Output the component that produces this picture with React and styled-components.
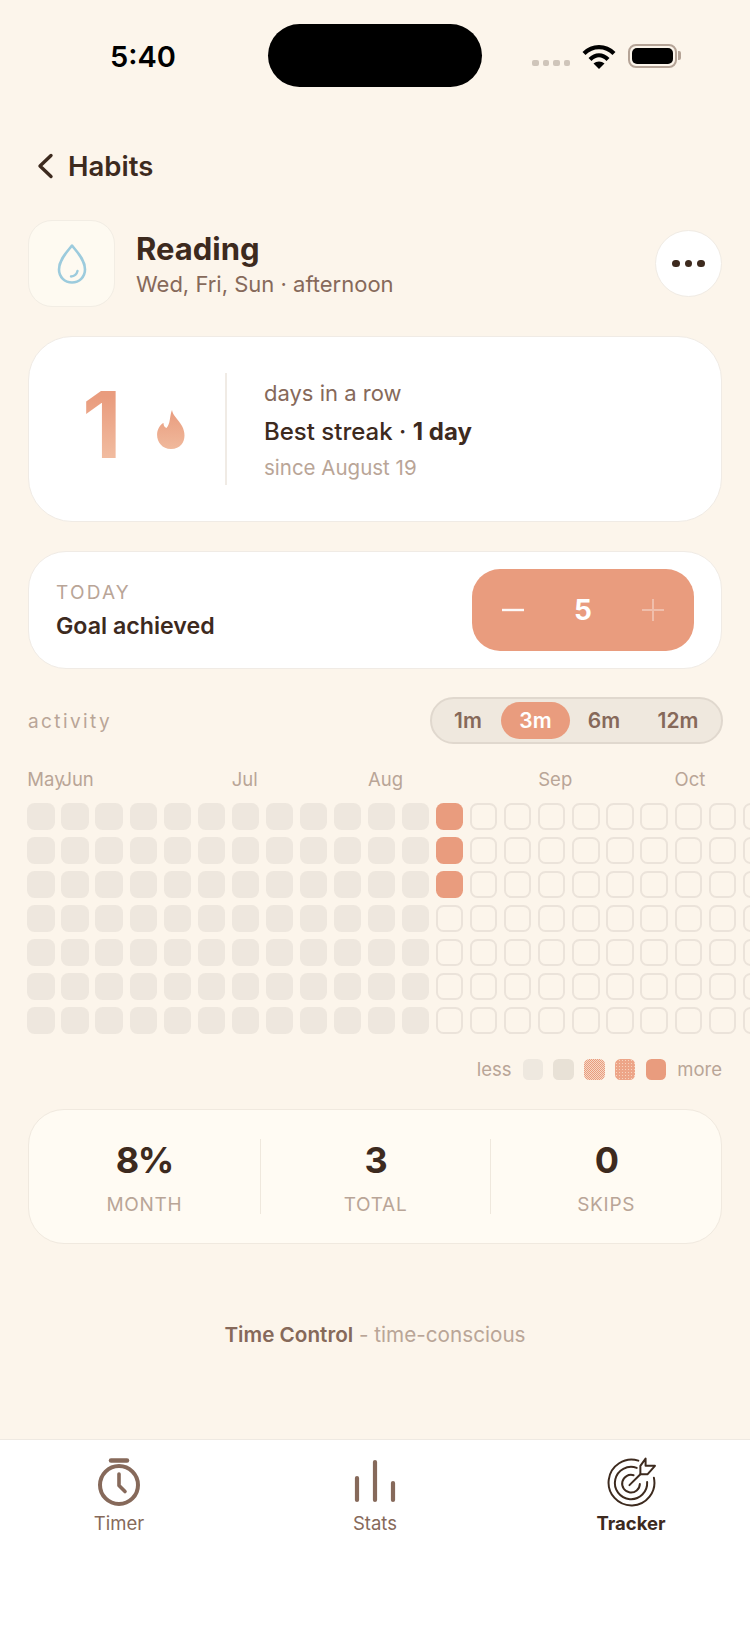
import React from "react";
import styled, { createGlobalStyle, css } from "styled-components";

const ACCENT = "#e99c7e";
const DARK = "#3d2a1e";
const MID = "#86695a";
const LIGHT = "#b9a597";
const PAGE = "#fcf5eb";

const MONTHS = [
  { name: "May", col: 1 },
  { name: "Jun", col: 2 },
  { name: "Jul", col: 7 },
  { name: "Aug", col: 11 },
  { name: "Sep", col: 16 },
  { name: "Oct", col: 20 },
];
const RANGES = [
  { label: "1m", width: 66 },
  { label: "3m", width: 69 },
  { label: "6m", width: 68 },
  { label: "12m", width: 80 },
];
const STATS = [
  { value: "8%", label: "MONTH" },
  { value: "3", label: "TOTAL" },
  { value: "0", label: "SKIPS" },
];

// 22 visible weeks, the last few run off the right edge
const cells = [];
for (let col = 0; col < 22; col++) {
  for (let row = 0; row < 7; row++) {
    let kind = "empty";
    if (col < 12) kind = "past";
    if (col === 12 && row < 3) kind = "done";
    cells.push(kind);
  }
}

export default function App() {
  return (
    <Root>
      <GlobalStyle />
      <StatusBar>
        <Time>5:40</Time>
        <Island />
        <StatusIcons>
          <SignalDots>
            <i />
            <i />
            <i />
            <i />
          </SignalDots>
          <svg width="34" height="25" viewBox="0 0 34 25">
            <path d="M2 9.5C10.500 1 23.500 1 32 9.500" fill="none" stroke="#000" strokeWidth="4.200" />
            <path d="M8 15.500C13.500 10 20.500 10 26 15.500" fill="none" stroke="#000" strokeWidth="4.200" />
            <path d="M11.500 19.500C14.500 16.800 19.500 16.800 22.500 19.500L17 25Z" fill="#000" />
          </svg>
          <Battery>
            <BatteryFill />
          </Battery>
        </StatusIcons>
      </StatusBar>

      <Main>
        <BackLink>
          <svg width="18" height="26" viewBox="0 0 18 26">
            <path d="M15 2.500L4 13l11 10.500" fill="none" stroke={DARK} strokeWidth="3.400" strokeLinecap="round" strokeLinejoin="round" />
          </svg>
          <span>Habits</span>
        </BackLink>

        <Header>
          <IconBox>
            <svg width="32" height="42" viewBox="0 0 32 42">
              <path
                d="M16 2.500C12 8 3 16 3 26.500C3 34 8.800 39.500 16 39.500C23.200 39.500 29 34 29 26.500C29 16 20 8 16 2.500Z"
                fill="none"
                stroke="#9ccbdd"
                strokeWidth="2.600"
                strokeLinejoin="round"
              />
              <path d="M15 33.500C18 33.300 20.800 31 21.500 28" fill="none" stroke="#9ccbdd" strokeWidth="2.400" strokeLinecap="round" />
            </svg>
          </IconBox>
          <HeaderText>
            <Title>Reading</Title>
            <Subtitle>Wed, Fri, Sun · afternoon</Subtitle>
          </HeaderText>
          <MoreButton>
            <i />
            <i />
            <i />
          </MoreButton>
        </Header>

        <StreakCard>
          <StreakCount>
            <BigNumber>1</BigNumber>
            <svg width="30" height="39" viewBox="0 0 30 39">
              <defs>
                <linearGradient id="flame" x1="0" y1="0" x2="0" y2="1">
                  <stop offset="0" stopColor="#e99c7e" />
                  <stop offset="1" stopColor="#f0b99c" />
                </linearGradient>
              </defs>
              <path
                d="M16 0C16.500 5 22 9 26 16C31 25 29 39 15 39C3 39 -2 26 3 17.500C4.500 15 6 13.500 7.500 13C7.500 15.500 8.500 17.500 10.500 18C14.500 14 13.500 6 16 0Z"
                fill="url(#flame)"
              />
            </svg>
          </StreakCount>
          <StreakText>
            <StreakLine>days in a row</StreakLine>
            <BestLine>
              Best streak · <b>1 day</b>
            </BestLine>
            <SinceLine>since August 19</SinceLine>
          </StreakText>
        </StreakCard>

        <TodayCard>
          <TodayText>
            <TodayLabel>TODAY</TodayLabel>
            <TodayGoal>Goal achieved</TodayGoal>
          </TodayText>
          <Stepper>
            <StepSign>
              <svg width="22" height="22" viewBox="0 0 22 22">
                <path d="M0 11h22" stroke="#fff" strokeWidth="2.400" opacity="0.95" />
              </svg>
            </StepSign>
            <StepValue>5</StepValue>
            <StepSign>
              <svg width="22" height="22" viewBox="0 0 22 22">
                <path d="M0 11h22M11 0v22" stroke="#fff" strokeWidth="2" opacity="0.35" />
              </svg>
            </StepSign>
          </Stepper>
        </TodayCard>

        <ActivityHead>
          <ActivityTitle>activity</ActivityTitle>
          <RangeSwitch>
            {RANGES.map((range) => (
              <RangeOption key={range.label} $active={range.label === "3m"} $width={range.width}>
                {range.label}
              </RangeOption>
            ))}
          </RangeSwitch>
        </ActivityHead>

        <MonthRow>
          {MONTHS.map((month) => (
            <MonthLabel key={month.name} $col={month.col}>
              {month.name}
            </MonthLabel>
          ))}
        </MonthRow>
        <HeatGrid>
          {cells.map((kind, i) => (
            <HeatCell key={i} $kind={kind} />
          ))}
        </HeatGrid>

        <Legend>
          <LegendText>less</LegendText>
          <LegendSwatches>
            <LegendSwatch $level={0} />
            <LegendSwatch $level={1} />
            <LegendSwatch $level={2} />
            <LegendSwatch $level={3} />
            <LegendSwatch $level={4} />
          </LegendSwatches>
          <LegendText>more</LegendText>
        </Legend>

        <StatsCard>
          {STATS.map((stat) => (
            <StatCol key={stat.label}>
              <StatValue>{stat.value}</StatValue>
              <StatLabel>{stat.label}</StatLabel>
            </StatCol>
          ))}
        </StatsCard>

        <Footnote>
          <b>Time Control</b> - time-conscious
        </Footnote>
      </Main>

      <TabBar>
        <TabItem>
          <svg width="44" height="48" viewBox="0 0 44 48">
            <path d="M14 2.500h16" stroke={MID} strokeWidth="4.500" strokeLinecap="round" />
            <circle cx="22" cy="27" r="19" fill="none" stroke={MID} strokeWidth="4" />
            <path d="M22 16v11.500l6 6" fill="none" stroke={MID} strokeWidth="3.600" strokeLinecap="round" strokeLinejoin="round" />
          </svg>
          <TabLabel>Timer</TabLabel>
        </TabItem>
        <TabItem>
          <svg width="44" height="48" viewBox="0 0 44 48">
            <path d="M4 20v22M22 4v38M40 25v17" fill="none" stroke={MID} strokeWidth="4.200" strokeLinecap="round" />
          </svg>
          <TabLabel>Stats</TabLabel>
        </TabItem>
        <TabItem>
          <TargetIcon width="50" height="50" viewBox="0 0 48 48">
            <g fill="none" stroke={DARK} strokeWidth="1.900" strokeLinecap="round" strokeLinejoin="round">
              <path d="M31 3.500A22 22 0 1 0 46 20" />
              <path d="M29.500 10.500A15.500 15.500 0 1 0 39.500 24" />
              <path d="M26.500 17.500A8.500 8.500 0 1 0 32.500 26" />
              <path d="M22.500 27L33 16.500" />
              <path d="M33 16.500V8.500L38 1.500V8.500H47L40 16.500Z" />
            </g>
          </TargetIcon>
          <TabLabel $active>Tracker</TabLabel>
        </TabItem>
      </TabBar>
    </Root>
  );
}

const GlobalStyle = createGlobalStyle`
  html, body {
    margin: 0;
    padding: 0;
    background: ${PAGE};
    overflow: hidden;
  }
  body {
    font-family: Inter, "Liberation Sans", sans-serif;
    color: ${DARK};
  }
`;

const Root = styled.div`
  width: 750px;
  height: 1630px;
  display: flex;
  flex-direction: column;
  overflow: hidden;
  background: ${PAGE};
`;

const StatusBar = styled.div`
  box-sizing: border-box;
  height: 110px;
  padding: 23.500px 64px 0 110px;
  display: flex;
  align-items: flex-start;
`;

const Time = styled.div`
  width: 66px;
  margin-top: 15px;
  font-size: 29px;
  line-height: 36px;
  font-weight: 600;
  color: #000;
  white-space: nowrap;
`;

const Island = styled.div`
  width: 214px;
  height: 63px;
  margin-left: 92px;
  border-radius: 32px;
  background: #000;
`;

const StatusIcons = styled.div`
  display: flex;
  align-items: center;
  gap: 12px;
  margin-top: 20px;
  margin-left: auto;
  width: 154px;
`;

const SignalDots = styled.div`
  display: flex;
  gap: 4px;
  margin-top: 14px;

  i {
    width: 6.500px;
    height: 6.500px;
    border-radius: 2px;
    background: #cfc5ba;
  }
`;

const Battery = styled.div`
  position: relative;
  box-sizing: border-box;
  width: 49px;
  height: 24px;
  padding: 2px;
  border: 2px solid #b5a497;
  border-radius: 8px;

  &::after {
    content: "";
    position: absolute;
    right: -6px;
    top: 5px;
    width: 3px;
    height: 9px;
    border-radius: 0 2px 2px 0;
    background: #b5a497;
  }
`;

const BatteryFill = styled.div`
  height: 100%;
  border-radius: 5px;
  background: #000;
`;

const Main = styled.main`
  flex: 1;
  padding: 0 28px;
  display: flex;
  flex-direction: column;
`;

const BackLink = styled.div`
  margin-top: 36px;
  height: 40px;
  padding-left: 8px;
  display: flex;
  align-items: center;
  gap: 14px;
  font-size: 27.500px;
  font-weight: 600;
  color: ${DARK};
`;

const Header = styled.div`
  margin-top: 34px;
  display: flex;
  align-items: center;
`;

const IconBox = styled.div`
  box-sizing: border-box;
  width: 87px;
  height: 87px;
  border: 1.500px solid #f2ede4;
  border-radius: 24px;
  background: #fefaf1;
  display: flex;
  align-items: center;
  justify-content: center;
`;

const HeaderText = styled.div`
  flex: 1;
  margin-left: 21px;
  margin-top: 2px;
`;

const Title = styled.div`
  font-size: 31px;
  line-height: 38px;
  font-weight: 700;
  color: ${DARK};
`;

const Subtitle = styled.div`
  margin-top: 1px;
  font-size: 22px;
  line-height: 30px;
  color: ${MID};
`;

const MoreButton = styled.div`
  box-sizing: border-box;
  width: 67px;
  height: 67px;
  border: 1.500px solid #f0ebe4;
  border-radius: 50%;
  background: #fff;
  display: flex;
  align-items: center;
  justify-content: center;
  gap: 5px;

  i {
    width: 7.500px;
    height: 7.500px;
    border-radius: 50%;
    background: ${DARK};
  }
`;

const Card = styled.div`
  box-sizing: border-box;
  border: 1.500px solid #f0ebe5;
  background: #fff;
`;

const StreakCard = styled(Card)`
  margin-top: 29px;
  height: 186px;
  border-radius: 44px;
  display: flex;
  align-items: center;
`;

const StreakCount = styled.div`
  width: 196px;
  padding-left: 53px;
  box-sizing: border-box;
  display: flex;
  align-items: center;
  gap: 34px;
`;

const BigNumber = styled.div`
  margin-top: -8px;
  font-size: 92px;
  line-height: 112px;
  font-weight: 700;
  background: linear-gradient(180deg, #e99c7e 25%, #f1bb9f 78%);
  -webkit-background-clip: text;
  background-clip: text;
  color: transparent;
`;

const StreakText = styled.div`
  box-sizing: border-box;
  height: 112px;
  padding-left: 37px;
  border-left: 2px solid #f0ebe5;
`;

const StreakLine = styled.div`
  margin-top: 2px;
  font-size: 22px;
  line-height: 36px;
  color: ${MID};
`;

const BestLine = styled.div`
  margin-top: 3px;
  font-size: 24px;
  line-height: 36px;
  font-weight: 500;
  color: ${DARK};

  b {
    font-weight: 700;
  }
`;

const SinceLine = styled.div`
  font-size: 20.500px;
  line-height: 36px;
  color: ${LIGHT};
`;

const TodayCard = styled(Card)`
  margin-top: 29px;
  height: 118px;
  padding: 0 27px;
  border-radius: 38px;
  display: flex;
  align-items: center;
  justify-content: space-between;
`;

const TodayText = styled.div`
  padding-top: 2px;
`;

const TodayLabel = styled.div`
  font-size: 19px;
  line-height: 26px;
  letter-spacing: 2.200px;
  color: ${LIGHT};
`;

const TodayGoal = styled.div`
  margin-top: 4px;
  font-size: 23.200px;
  line-height: 32px;
  font-weight: 600;
  color: ${DARK};
`;

const Stepper = styled.div`
  box-sizing: border-box;
  width: 222px;
  height: 82px;
  padding: 0 30px;
  border-radius: 28px;
  background: ${ACCENT};
  display: flex;
  align-items: center;
  justify-content: space-between;
`;

const StepSign = styled.div`
  display: flex;
`;

const StepValue = styled.div`
  font-size: 28px;
  font-weight: 700;
  color: #fff;
`;

const ActivityHead = styled.div`
  margin-top: 28px;
  display: flex;
  align-items: center;
  justify-content: space-between;
`;

const ActivityTitle = styled.div`
  padding-top: 1px;
  font-size: 19px;
  letter-spacing: 2.400px;
  color: ${LIGHT};
`;

const RangeSwitch = styled.div`
  box-sizing: border-box;
  width: 293px;
  height: 47px;
  margin-right: -1px;
  padding: 3px;
  border: 2px solid #e0d8ce;
  border-radius: 24px;
  background: #efe8de;
  display: flex;
`;

const RangeOption = styled.div`
  width: ${(p) => p.$width}px;
  border-radius: 19px;
  font-size: 21px;
  line-height: 37px;
  font-weight: 600;
  text-align: center;
  color: ${(p) => (p.$active ? "#fff" : MID)};
  background: ${(p) => (p.$active ? ACCENT : "transparent")};
`;

const weekColumns = css`
  display: grid;
  margin-left: -0.700px;
  grid-template-columns: repeat(22, 27.200px);
  column-gap: 6.880px;
`;

const MonthRow = styled.div`
  ${weekColumns}
  margin-top: 23px;
  height: 24px;
`;

const MonthLabel = styled.div`
  grid-column: ${(p) => p.$col};
  grid-row: 1;
  font-size: 18.500px;
  line-height: 24px;
  color: ${LIGHT};
  white-space: nowrap;
`;

const HeatGrid = styled.div`
  ${weekColumns}
  margin-top: 11.500px;
  grid-template-rows: repeat(7, 27.200px);
  row-gap: 6.880px;
  grid-auto-flow: column;
`;

const HeatCell = styled.div`
  box-sizing: border-box;
  border-radius: 7.500px;
  ${(p) => p.$kind === "past" && "background: #eee7de;"}
  ${(p) => p.$kind === "done" && `background: ${ACCENT};`}
  ${(p) => p.$kind === "empty" && "border: 2px solid #ebe3da;"}
`;

const Legend = styled.div`
  margin-top: 25px;
  display: flex;
  align-items: center;
  justify-content: flex-end;
  gap: 11px;
`;

const LegendText = styled.div`
  font-size: 18.500px;
  line-height: 21px;
  color: ${LIGHT};
`;

const LegendSwatches = styled.div`
  display: flex;
  gap: 10.200px;
`;

const legendFill = [
  "background: #eee8df;",
  "background: #e8e1d6;",
  "background: repeating-conic-gradient(#e99c7e 0 25%, #f6d8c6 0 50%) 0 0 / 2px 2px;",
  "background: radial-gradient(circle, #f6d3be 28%, #eda588 32%) 0 0 / 3px 3px;",
  `background: ${ACCENT};`,
];

const LegendSwatch = styled.div`
  width: 20.600px;
  height: 20.600px;
  border-radius: 5.500px;
  ${(p) => legendFill[p.$level]}
`;

const StatsCard = styled.div`
  box-sizing: border-box;
  margin-top: 29px;
  height: 135px;
  padding: 29px 0;
  border: 1.500px solid #f0e9df;
  border-radius: 36px;
  background: #fffbf3;
  display: grid;
  grid-template-columns: repeat(3, 1fr);
`;

const StatCol = styled.div`
  display: flex;
  flex-direction: column;
  align-items: center;
  justify-content: space-between;

  & + & {
    border-left: 1.500px solid #efe8dd;
  }
`;

const StatValue = styled.div`
  margin-top: -1px;
  font-size: 36px;
  line-height: 44px;
  font-weight: 700;
  letter-spacing: -1.500px;
  color: ${DARK};
`;

const StatLabel = styled.div`
  margin-bottom: -4px;
  font-size: 19px;
  line-height: 26px;
  letter-spacing: 0.700px;
  color: ${LIGHT};
`;

const Footnote = styled.div`
  margin-top: 79px;
  font-size: 20.700px;
  line-height: 24px;
  text-align: center;
  color: ${LIGHT};

  b {
    font-weight: 600;
    color: ${MID};
  }
`;

const TabBar = styled.nav`
  box-sizing: border-box;
  height: 191px;
  padding: 18px 79px 0;
  border-top: 1px solid #eee9e2;
  background: #fff;
  display: flex;
  justify-content: space-between;
  align-items: flex-start;
`;

const TabItem = styled.div`
  width: 80px;
  display: flex;
  flex-direction: column;
  align-items: center;
  gap: 5px;
`;

const TargetIcon = styled.svg`
  margin: -1px 0;
`;

const TabLabel = styled.div`
  font-size: 18.500px;
  line-height: 24px;
  white-space: nowrap;
  font-weight: ${(p) => (p.$active ? 700 : 400)};
  color: ${(p) => (p.$active ? DARK : MID)};
`;
